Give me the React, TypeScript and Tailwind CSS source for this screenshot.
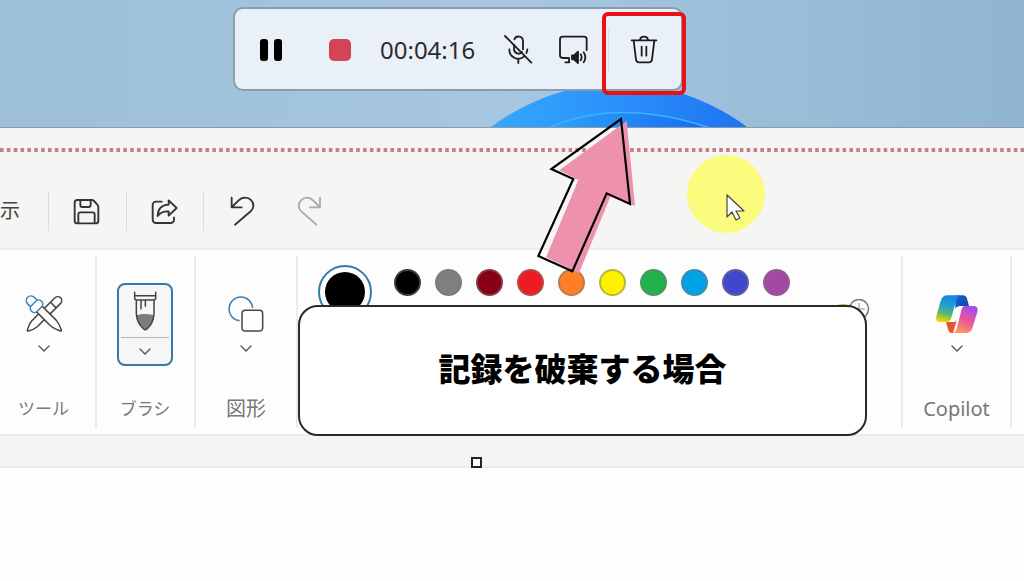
import React from 'react';

const SWATCHES = [
  { name: '黒', color: 'bg-black' },
  { name: '灰色', color: 'bg-[#7f7f7f]' },
  { name: '濃い赤', color: 'bg-[#880015]' },
  { name: '赤', color: 'bg-[#ed1c24]' },
  { name: 'オレンジ', color: 'bg-[#ff7f27]' },
  { name: '黄', color: 'bg-[#fff200]' },
  { name: '緑', color: 'bg-[#22b14c]' },
  { name: '青緑', color: 'bg-[#00a2e8]' },
  { name: '藍', color: 'bg-[#3f48cc]' },
  { name: '紫', color: 'bg-[#a349a4]' },
];

const Chevron = () => (
  <svg width="12" height="7" viewBox="0 0 12 7" fill="none" stroke="#555" strokeWidth="1.4" strokeLinecap="round" strokeLinejoin="round">
    <path d="M1 1l5 5 5-5" />
  </svg>
);

const MicOffIcon = () => (
  <svg width="29" height="29" viewBox="73 105 87 87" fill="none" stroke="#1c1c1c" strokeWidth="5.4" strokeLinecap="round">
    <path d="M103 135v13a13.500 13.500 0 0 0 24 8M104 118a13.500 13.500 0 0 1 26 4v26" />
    <path d="M89 148a27 27 0 0 0 44 22M143 148q0 6-3 11M116 176v13M76 108l79 80" />
  </svg>
);

const SystemAudioIcon = () => (
  <svg width="30" height="29" viewBox="235 105 90 87" fill="none" stroke="#1c1c1c" strokeWidth="5.4" strokeLinecap="round" strokeLinejoin="round">
    <path d="M264 174h-15a8 8 0 0 1-8-8v-48a8 8 0 0 1 8-8h64a8 8 0 0 1 8 8v32M268 174v13M257 187h12" />
    <path d="M277 166h6l12-11v34l-12-11h-6z" fill="#1c1c1c" />
    <path d="M303 163q6 9 0 18M312 157q10 15 0 30" />
  </svg>
);

const TrashIcon = () => (
  <svg width="28" height="29" viewBox="450 105 84 87" fill="none" stroke="#1c1c1c" strokeWidth="5.4" strokeLinecap="round" strokeLinejoin="round">
    <path d="M455 121h74M480 120q1-10 12-10t12 10M461 122l7 57q1 8 9 8h30q8 0 9-8l7-57M485 140v27M499 140v27" />
  </svg>
);

const SaveIcon = () => (
  <svg width="27" height="27" viewBox="220 200 81 81" fill="none" stroke="#333" strokeWidth="5.6" strokeLinejoin="round">
    <path d="M233 206h44q3 0 6 3l10 11q3 3 3 7v41a8 8 0 0 1-8 8h-55a8 8 0 0 1-8-8v-54a8 8 0 0 1 8-8z" />
    <path d="M242 206v15a6 6 0 0 0 6 6h19a6 6 0 0 0 6-6v-15M236 276v-27a6 6 0 0 1 6-6h37a6 6 0 0 1 6 6v27" />
  </svg>
);

const ShareIcon = () => (
  <svg width="27" height="27" viewBox="453 200 81 81" fill="none" stroke="#333" strokeWidth="5.6" strokeLinecap="round" strokeLinejoin="round">
    <path d="M485 211h-17a10 10 0 0 0-10 10v44a10 10 0 0 0 10 10h44a10 10 0 0 0 10-10v-7" />
    <path d="M506 207l24 23-24 23v-13q-22-1-33 14 1-33 33-34z" />
  </svg>
);

const UndoIcon = () => (
  <svg width="26" height="30" viewBox="688 195 78 90" fill="none" stroke="#333" strokeWidth="5.6" strokeLinecap="round" strokeLinejoin="round">
    <path d="M696 200v29h30M697 228l19-19c11-12 29-12 39-1 9 10 8 24-2 33l-47 40" />
  </svg>
);

const RedoIcon = () => (
  <svg width="26" height="30" viewBox="888 195 78 90" fill="none" stroke="#aaa" strokeWidth="5.6" strokeLinecap="round" strokeLinejoin="round">
    <path d="M960 200v29h-30M959 228l-19-19c-11-12-27-12-37-1-10 10-9 24 1 33l45 40" />
  </svg>
);

const ToolsIcon = () => (
  <svg width="38" height="38" viewBox="77 149 114 114" fill="#fdfdfd" stroke="#444" strokeWidth="4.5" strokeLinejoin="round">
    <g transform="translate(135 206) rotate(45)">
      <path d="M-12 42V-56a12 13 0 0 1 24 0V42Q11 54 2 70q-2 3-4 0-9-16-10-28z" />
      <path d="M-12-38h24" />
    </g>
    <g transform="translate(135 206) rotate(-45)">
      <path d="M-12-22V38Q-11 54-2 70q2 3 4 0Q11 54 12 38v-60z" />
      <path d="M-14-42v-14a14 15 0 0 1 28 0v14z" stroke="#3f83b5" />
      <rect x="-21" y="-45" width="42" height="24" rx="11" stroke="#3f83b5" />
    </g>
  </svg>
);

const BrushIcon = () => (
  <svg width="24" height="40" viewBox="400 135 72 120" fill="none" stroke="#444" strokeWidth="4.5" strokeLinecap="round" strokeLinejoin="round">
    <path d="M410 208q26-8 53 0-3 28-22 42-4 2-8 0-20-15-23-42z" fill="#7c7c7c" stroke="none" />
    <path d="M405 139v17q0 6 6 6h51q6 0 6-6v-17M405 149h62M410 162v42q2 28 22 45 5 4 10 0 19-16 21-45v-42M424 163v25M437 163v18" />
  </svg>
);

const ShapesIcon = () => (
  <svg width="36" height="36" viewBox="112 149 108 108" fill="none" strokeWidth="4.5">
    <path d="M186 185A35.500 35.500 0 1 0 147 223" stroke="#3f83b5" />
    <rect x="154" y="192" width="62" height="62" rx="10" stroke="#444" />
  </svg>
);

const CopilotIcon = () => (
  <svg width="42" height="38" viewBox="467 162 126 114">
    <defs>
      <linearGradient id="cp-left" x1=".6" y1="0" x2=".4" y2="1">
        <stop offset="0" stopColor="#1687e6" />
        <stop offset=".4" stopColor="#1f9fd2" />
        <stop offset=".7" stopColor="#5cb96a" />
        <stop offset="1" stopColor="#f3d500" />
      </linearGradient>
      <linearGradient id="cp-right" x1=".7" y1="0" x2=".3" y2="1">
        <stop offset="0" stopColor="#a04df0" />
        <stop offset=".5" stopColor="#ea5599" />
        <stop offset="1" stopColor="#ff9a63" />
      </linearGradient>
      <linearGradient id="cp-fold" x1="0" y1="0" x2="1" y2="1">
        <stop offset="0" stopColor="#1764d8" />
        <stop offset="1" stopColor="#123f9f" />
      </linearGradient>
    </defs>
    <path d="M525 163h22q10 0 13 10l6 22h-24q-12 0-17 12z" fill="url(#cp-fold)" />
    <path d="M497 243h22q8 0 11-8l-12 41h-4q-8 0-11-11z" fill="#e8552f" />
    <path d="M501 163h38q-8 2-11 13l-15 54q-4 13-17 13h-16q-16 0-12-18l13-45q5-17 20-17z" fill="url(#cp-left)" />
    <path d="M554 195h26q15 0 11 18l-14 46q-5 17-20 17h-40q9-2 12-12l14-56q3-13 11-13z" fill="url(#cp-right)" />
    <path d="M539 196h8q-5 3-7 11l-8 28q-3 8-12 8h-9q3-3 4-8l8-28q3-11 16-11z" fill="#fff" />
  </svg>
);

const ColorWheelIcon = () => (
  <svg width="46" height="40" viewBox="0 0 46 40" fill="none">
    <circle cx="19" cy="25" r="20" fill="#84d62b" />
    <circle cx="35" cy="10" r="9.500" fill="#fdfdfd" stroke="#777" strokeWidth="1.500" />
    <path d="M35 4v12M29 10h12" stroke="#888" />
  </svg>
);

/** Blue petal of the wallpaper that shows above the window. */
const Bloom = () => (
  <svg className="absolute bottom-0 left-[480px]" width="280" height="47" viewBox="0 0 280 47">
    <defs>
      <linearGradient id="bloom" x1="0" y1="0" x2="1" y2="0">
        <stop offset="0" stopColor="#3cb7ff" />
        <stop offset=".45" stopColor="#2c94fb" />
        <stop offset="1" stopColor="#1760ee" />
      </linearGradient>
      <linearGradient id="bloom-in" x1="0" y1="0" x2="1" y2="0">
        <stop offset="0" stopColor="#2ea4fb" />
        <stop offset="1" stopColor="#146af2" />
      </linearGradient>
    </defs>
    <circle cx="139" cy="216" r="212" fill="url(#bloom)" />
    <path d="M68 48q70-31 162 0" fill="url(#bloom-in)" stroke="#3fb4ff" strokeWidth="1.500" />
  </svg>
);

const RecorderBar = () => (
  <div className="relative flex h-[84px] w-[450px] items-center rounded-[10px] border-2 border-[#8a9dad] bg-[#e9f0f8] pt-px pl-6">
    <button aria-label="一時停止" className="flex w-6 justify-center gap-[6px]">
      <span className="h-[22px] w-2 rounded-[3px] bg-black" />
      <span className="h-[22px] w-2 rounded-[3px] bg-black" />
    </button>
    <button aria-label="停止" className="ml-[46px] size-[22px] rounded-[5px] bg-[#d34457]" />
    <time className="ml-[29px] w-[97px] text-2xl text-[#2b2b2b]">00:04:16</time>
    <button aria-label="マイク" className="ml-[27px]">
      <MicOffIcon />
    </button>
    <button aria-label="システム音声" className="ml-[25px]">
      <SystemAudioIcon />
    </button>
    <span className="ml-5 h-[42px] w-px bg-[#d5dce4]" />
    <button aria-label="破棄" className="ml-[21px]">
      <TrashIcon />
    </button>
  </div>
);

const RibbonGroup = ({
  label,
  labelSize = 'text-[17px]',
  className,
  children,
}: {
  label: string;
  labelSize?: string;
  className: string;
  children: React.ReactNode;
}) => (
  <section className={`flex flex-col items-center border-r-2 border-[#ebebeb] pt-[27px] ${className}`}>
    {children}
    <span className={`mt-[29px] leading-7 text-[#777] ${labelSize}`}>{label}</span>
  </section>
);

const MenuButton = ({ label, children }: { label: string; children: React.ReactNode }) => (
  <button aria-label={label} className="flex h-[83px] w-14 flex-col items-center pt-3">
    <span className="flex h-[38px] items-center">{children}</span>
    <span className="mt-3">
      <Chevron />
    </span>
  </button>
);

const QuickBar = () => (
  <nav className="flex h-[74px] items-center">
    <button className="w-12 text-left text-xl text-[#444]">示</button>
    <span className="h-10 w-px bg-[#dcdcdc]" />
    <button aria-label="保存" className="ml-6">
      <SaveIcon />
    </button>
    <span className="ml-[26px] h-10 w-px bg-[#dcdcdc]" />
    <button aria-label="共有" className="ml-6">
      <ShareIcon />
    </button>
    <span className="ml-[25px] h-10 w-px bg-[#dcdcdc]" />
    <button aria-label="元に戻す" className="ml-[25px]">
      <UndoIcon />
    </button>
    <button aria-label="やり直し" className="ml-[41px]">
      <RedoIcon />
    </button>
  </nav>
);

const Ribbon = () => (
  <div className="flex h-[188px] border-y-2 border-[#ececec] bg-[#fdfdfd] py-[6px]">
    <RibbonGroup label="ツール" className="w-[97px] pr-2">
      <MenuButton label="ツール">
        <ToolsIcon />
      </MenuButton>
    </RibbonGroup>
    <RibbonGroup label="ブラシ" className="w-[99px] pr-px">
      <button
        aria-label="ブラシ"
        className="flex h-[83px] w-14 flex-col items-center rounded-lg border-2 border-[#3579a8] bg-[#f6f6f6] pt-[6px]"
      >
        <BrushIcon />
        <span className="mt-[6px] h-px w-12 bg-[#b5b5b5]" />
        <span className="mt-[10px]">
          <Chevron />
        </span>
      </button>
    </RibbonGroup>
    <RibbonGroup label="図形" labelSize="text-xl" className="w-[102px]">
      <MenuButton label="図形">
        <ShapesIcon />
      </MenuButton>
    </RibbonGroup>
    <section className="flex flex-1 items-start border-r-2 border-[#ebebeb] pl-5">
      <button aria-label="色 1" className="mt-[9px] rounded-full border-2 border-[#3579a8] p-[5px]">
        <span className="block size-10 rounded-full bg-black" />
      </button>
      <div className="mt-[13px] ml-[22px] flex gap-[14px]">
        {SWATCHES.map((s) => (
          <button
            key={s.name}
            aria-label={s.name}
            className={`size-[27px] rounded-full border-2 border-[#777]/50 ${s.color}`}
          />
        ))}
      </div>
      <button aria-label="色の編集" className="mt-[43px] ml-[34px]">
        <ColorWheelIcon />
      </button>
    </section>
    <RibbonGroup label="Copilot" labelSize="text-xl" className="w-[109px]">
      <MenuButton label="Copilot">
        <CopilotIcon />
      </MenuButton>
    </RibbonGroup>
    <div className="w-3" />
  </div>
);

const Arrow = () => (
  <svg className="absolute top-[115px] left-[536px]" width="102" height="162" viewBox="48 45 306 486">
    <path d="M320 63l25 255-74-28-94 230-99-48 97-232-57-29z" fill="#ee91ad" />
    <path d="M303 57l27 255-70-32-103 234-102-46 105-231-66-30z" fill="none" stroke="#000" strokeWidth="6.500" />
  </svg>
);

const Pointer = () => (
  <div className="absolute top-[155px] left-[687px] flex size-[78px] items-center justify-center rounded-full bg-[#fbfb7e] pt-[26px] pl-[18px]">
    <svg width="19" height="27" viewBox="0 0 19 27" fill="#fff" stroke="#444" strokeWidth="1.200" strokeLinejoin="round">
      <path d="M1 1v22l5-5 4 8 4-2-4-7h8z" />
    </svg>
  </div>
);

export default function App() {
  return (
    <main className="relative flex min-h-screen flex-col overflow-hidden bg-[#fdfdfd] font-['Noto_Sans','Noto_Sans_CJK_JP',sans-serif]">
      <header className="relative h-[127px] bg-linear-to-r from-[#9dbfd8] via-[#a6c7df] to-[#90b5d2] pt-[7px] pl-[233px]">
        <Bloom />
        <RecorderBar />
      </header>

      <div className="border-t border-[#8f9aa5] bg-[#f5f5f4]">
        <svg className="mt-5 block w-full" height="4">
          <line x1="0" y1="2" x2="100%" y2="2" stroke="#c4808c" strokeWidth="4" strokeDasharray="3.6 3.250" />
        </svg>
        <div className="pt-[22px]">
          <QuickBar />
        </div>
      </div>

      <Ribbon />
      <div className="h-[30px] bg-[#f4f4f3]" />
      <div className="relative flex-1 border-t-2 border-[#ececec]">
        <span className="absolute -top-[11px] left-[471px] size-[11px] border-2 border-[#222] bg-white" />
      </div>

      <div className="absolute top-[305px] left-[298px] flex h-[131px] w-[569px] items-center justify-center rounded-[20px] border-2 border-[#2a2a2a] bg-white">
        <p className="pb-2 font-['Noto_Sans_CJK_JP',sans-serif] text-[32px] font-black">記録を破棄する場合</p>
      </div>
      <div className="absolute top-[12px] left-[602px] h-[83px] w-[84px] rounded-md border-4 border-[#ea1017]" />
      <Pointer />
      <Arrow />
    </main>
  );
}
